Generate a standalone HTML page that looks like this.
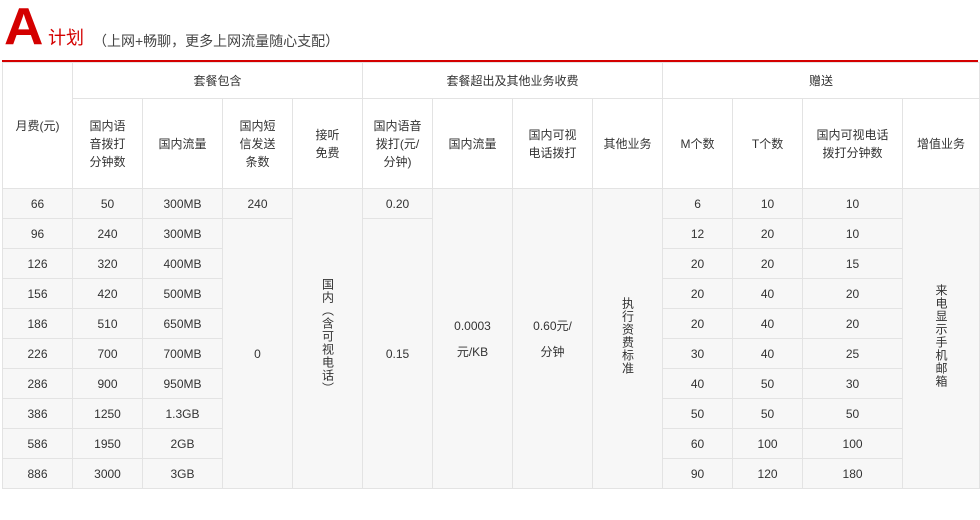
<!DOCTYPE html>
<html><head><meta charset="utf-8"><style>
body{margin:0;width:980px;height:520px;background:#fff;font-family:"Liberation Sans","Noto Sans CJK SC",sans-serif;color:#333;position:relative;overflow:hidden}
.A{position:absolute;left:4px;top:1px;font-size:52px;font-weight:bold;color:#d40000;line-height:52px;transform:scaleX(1.05);transform-origin:left top}
.jh{position:absolute;left:48px;top:28px;font-size:18px;color:#d40000;line-height:20px}
.sub{position:absolute;left:93px;top:32px;font-size:14px;color:#444;line-height:18px}
.red{position:absolute;left:2px;top:60px;width:976px;height:2px;background:#d40000}
table{position:absolute;left:2px;top:62px;width:977px;border-collapse:collapse;table-layout:fixed;font-size:12px}
td{border:1px solid #e3e3e3;text-align:center;vertical-align:middle;padding:0;line-height:18px}
thead td{background:#fff}
tbody td{background:#f7f7f7;height:29px}
.v{writing-mode:vertical-rl;text-orientation:upright;display:inline-block;line-height:14px;letter-spacing:1px}
</style></head><body>
<div class="A">A</div><div class="jh">计划</div>
<div class="sub">（上网+畅聊，更多上网流量随心支配）</div>
<div class="red"></div>
<table>
<colgroup><col style="width:70px"><col style="width:70px"><col style="width:80px"><col style="width:70px"><col style="width:70px"><col style="width:70px"><col style="width:80px"><col style="width:80px"><col style="width:70px"><col style="width:70px"><col style="width:70px"><col style="width:100px"><col style="width:77px"></colgroup>
<thead>
<tr style="height:36px"><td rowspan="2">月费(元)</td><td colspan="4">套餐包含</td><td colspan="4">套餐超出及其他业务收费</td><td colspan="4">赠送</td></tr>
<tr style="height:90px"><td>国内语<br>音拨打<br>分钟数</td><td>国内流量</td><td>国内短<br>信发送<br>条数</td><td>接听<br>免费</td><td>国内语音<br>拨打(元/<br>分钟)</td><td>国内流量</td><td>国内可视<br>电话拨打</td><td>其他业务</td><td>M个数</td><td>T个数</td><td>国内可视电话<br>拨打分钟数</td><td>增值业务</td></tr>
</thead>
<tbody>
<tr><td>66</td><td>50</td><td>300MB</td><td>240</td><td rowspan="10"><span class="v">国内（含可视电话）</span></td><td>0.20</td><td rowspan="10" style="line-height:26px">0.0003<br>元/KB</td><td rowspan="10" style="line-height:26px">0.60元/<br>分钟</td><td rowspan="10"><span class="v">执行资费标准</span></td><td>6</td><td>10</td><td>10</td><td rowspan="10"><span class="v">来电显示手机邮箱</span></td></tr>
<tr><td>96</td><td>240</td><td>300MB</td><td rowspan="9">0</td><td rowspan="9">0.15</td><td>12</td><td>20</td><td>10</td></tr>
<tr><td>126</td><td>320</td><td>400MB</td><td>20</td><td>20</td><td>15</td></tr>
<tr><td>156</td><td>420</td><td>500MB</td><td>20</td><td>40</td><td>20</td></tr>
<tr><td>186</td><td>510</td><td>650MB</td><td>20</td><td>40</td><td>20</td></tr>
<tr><td>226</td><td>700</td><td>700MB</td><td>30</td><td>40</td><td>25</td></tr>
<tr><td>286</td><td>900</td><td>950MB</td><td>40</td><td>50</td><td>30</td></tr>
<tr><td>386</td><td>1250</td><td>1.3GB</td><td>50</td><td>50</td><td>50</td></tr>
<tr><td>586</td><td>1950</td><td>2GB</td><td>60</td><td>100</td><td>100</td></tr>
<tr><td>886</td><td>3000</td><td>3GB</td><td>90</td><td>120</td><td>180</td></tr>
</tbody>
</table>
</body></html>
